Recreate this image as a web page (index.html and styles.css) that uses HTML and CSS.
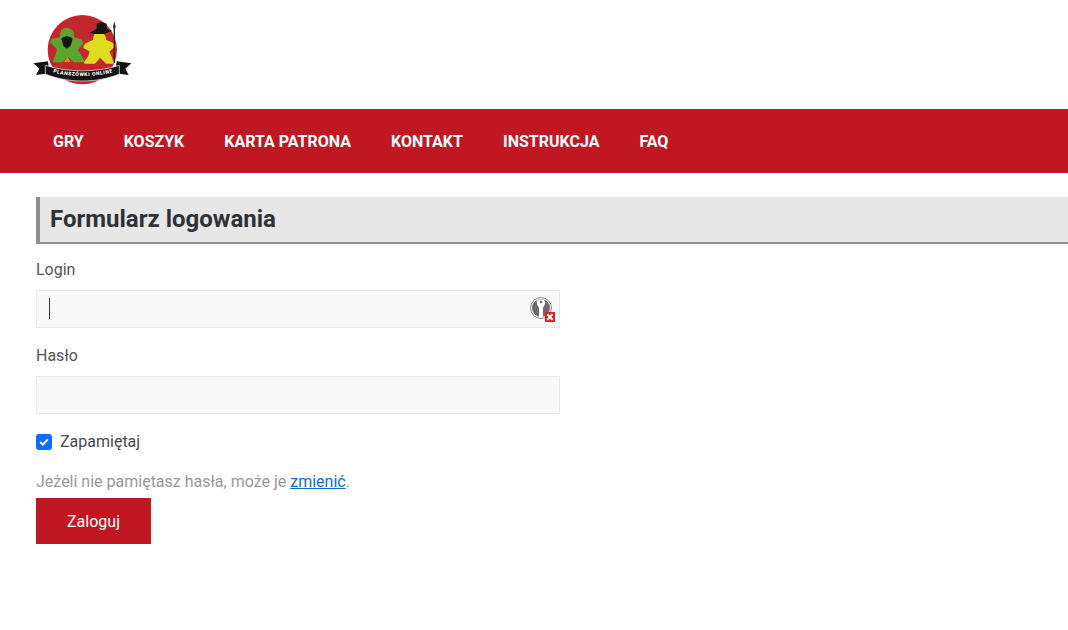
FILE: index.html
```
<!DOCTYPE html>
<html lang="pl">
<head>
<meta charset="utf-8">
<title>Logowanie</title>
<link rel="stylesheet" href="styles.css">
</head>
<body>
<header class="logo-bar">
  <svg class="logo" width="100" height="72" viewBox="27 21 300 216" aria-hidden="true">
    <circle cx="175" cy="125" r="104" fill="#c1272d"/>
    <path class="meeple-green" d="M128 62 C114 62 110 75 110 90 L86 95 L81 102 L102 122 L98 140 L89 160 L115 160 L130 140 L150 160 L179 160 L158 125 L175 105 L170 97 L148 90 C148 72 143 62 128 62 Z"/>
    <path d="M112 92 C120 82 138 82 146 92 L140 113 L128 122 L118 113 Z" fill="#151515"/>
    <path class="meeple-yellow" d="M225 76 C212 76 210 85 210 97 L185 109 L181 118 L200 128 L196 145 L183 164 L212 164 L228 145 L248 164 L267 164 L253 130 L269 115 L265 107 L243 97 C243 85 238 76 225 76 Z"/>
    <path d="M197 74 L218 62 L218 48 C228 40 240 42 248 48 L248 62 L264 68 L240 78 L210 78 Z" fill="#151515"/>
    <path d="M271 60 L271 165" stroke="#2a2a2a" stroke-width="4"/>
    <path d="M267 56 L271 40 L275 56 L271 68 Z" fill="#2a2a2a"/>
    <path d="M120 162 L130 146 L140 162 Z" fill="#e58a1f"/>
    <path d="M218 168 L228 150 L238 168 Z" fill="#c1272d"/>
    <path d="M28 166 L72 160 L76 196 L36 201 L46 182 Z" fill="#111"/>
    <path d="M322 166 L278 160 L274 196 L314 201 L304 182 Z" fill="#111"/>
    <path d="M64 172 C130 194 220 194 286 172 L286 198 C220 226 130 226 64 198 Z" fill="#111" stroke="#fff" stroke-width="2"/>
    <path id="logo-curve" d="M84 192 C135 208 215 208 270 192" fill="none"/>
    <text class="logo-text"><textPath href="#logo-curve" startOffset="50%" text-anchor="middle">PLANSZÓWKI ONLINE</textPath></text>
  </svg>
</header>

<nav class="nav">
  <a class="nav-link" href="#">GRY</a>
  <a class="nav-link" href="#">KOSZYK</a>
  <a class="nav-link" href="#">KARTA PATRONA</a>
  <a class="nav-link" href="#">KONTAKT</a>
  <a class="nav-link" href="#">INSTRUKCJA</a>
  <a class="nav-link" href="#">FAQ</a>
</nav>

<main class="content">
  <h1 class="title">Formularz logowania</h1>
  <form class="form">
    <label class="label">Login</label>
    <div class="field">
      <span class="caret"></span>
      <svg class="key-icon" width="26" height="26" viewBox="0 0 26 26" aria-hidden="true">
        <circle cx="12" cy="11" r="10.500" fill="#fff" stroke="#8a8a8a" stroke-width="1"/>
        <circle cx="12" cy="11" r="9" fill="#6a6a6a"/>
        <path d="M8 4 C9.500 2 14.500 2 16 4 C17 7 14.500 9 14 11 L14 20 L10 20 L10 11 C9.500 9 7 7 8 4 Z" fill="#fff"/>
        <circle cx="12" cy="5" r="1.300" fill="#6a6a6a"/>
        <rect x="16" y="15" width="10" height="10" fill="#e01b22"/>
        <path d="M18.300 17.300 L23.700 22.700 M23.700 17.300 L18.300 22.700" stroke="#fff" stroke-width="2"/>
      </svg>
    </div>
    <label class="label label-next">Hasło</label>
    <div class="field"></div>
    <label class="check-row">
      <span class="check">
        <svg width="10" height="8" viewBox="0 0 10 8" aria-hidden="true"><path d="M1.200 4 L3.900 6.600 L8.800 1.400" fill="none" stroke="#fff" stroke-width="2"/></svg>
      </span>
      Zapamiętaj
    </label>
    <p class="hint">Jeżeli nie pamiętasz hasła, może je <a class="hint-link" href="#">zmienić</a>.</p>
    <button class="submit" type="button">Zaloguj</button>
  </form>
</main>
</body>
</html>
```
FILE: styles.css
```
* { box-sizing: border-box; }
html, body { margin: 0; padding: 0; }
body {
  background: #fff;
  font-family: Roboto, "Liberation Sans", sans-serif;
  font-size: 16px;
  color: #444;
  overflow: hidden;
}
.logo-bar {
  height: 109px;
  padding: 15px 0 0 33px;
}
.logo { display: block; }
.meeple-green { fill: #5da42f; stroke: #5da42f; stroke-width: 6; stroke-linejoin: round; }
.meeple-yellow { fill: #dfdc1d; stroke: #dfdc1d; stroke-width: 6; stroke-linejoin: round; }
.logo-text {
  font-family: Roboto, sans-serif;
  font-size: 15px;
  font-weight: 900;
  letter-spacing: 1.800px;
  fill: #fff;
}
.nav {
  height: 64px;
  background: #c01722;
  display: flex;
  align-items: center;
  padding-left: 33px;
}
.nav-link {
  padding: 0 20px;
  color: #fff;
  font-weight: 700;
  font-size: 16px;
  text-decoration: none;
}
.content { padding: 24px 0 0 36px; }
.title {
  margin: 0;
  height: 47px;
  background: #e7e7e7;
  border-left: 4px solid #8e8e8e;
  border-bottom: 2px solid #8e8e8e;
  padding-left: 10px;
  font-size: 24px;
  font-weight: 700;
  line-height: 44px;
  color: #2f3135;
}
.form { width: 524px; padding-top: 16px; }
.label {
  display: block;
  height: 19px;
  line-height: 19px;
  margin-bottom: 11px;
  color: #555;
}
.label-next { margin-top: 18px; }
.field {
  position: relative;
  height: 38px;
  background: #f9f9f9;
  border: 1px solid #e9e9e9;
}
.caret {
  position: absolute;
  left: 12px;
  top: 7px;
  width: 1px;
  height: 21px;
  background: #333;
}
.key-icon { position: absolute; right: 4px; top: 6px; }
.check-row {
  display: flex;
  align-items: center;
  gap: 8px;
  margin-top: 18px;
  height: 19px;
  color: #4a4a4a;
}
.check {
  width: 16px;
  height: 16px;
  border-radius: 3px;
  background: #0d6efd;
  display: flex;
  align-items: center;
  justify-content: center;
}
.hint {
  margin: 21px 0 0;
  height: 19px;
  line-height: 19px;
  color: #95989c;
  white-space: nowrap;
}
.hint-link { color: #0d6ed0; }
.submit {
  display: block;
  margin-top: 7px;
  width: 115px;
  height: 46px;
  background: #c01722;
  border: 0;
  color: #fff;
  font: 400 16px Roboto, sans-serif;
}
```
